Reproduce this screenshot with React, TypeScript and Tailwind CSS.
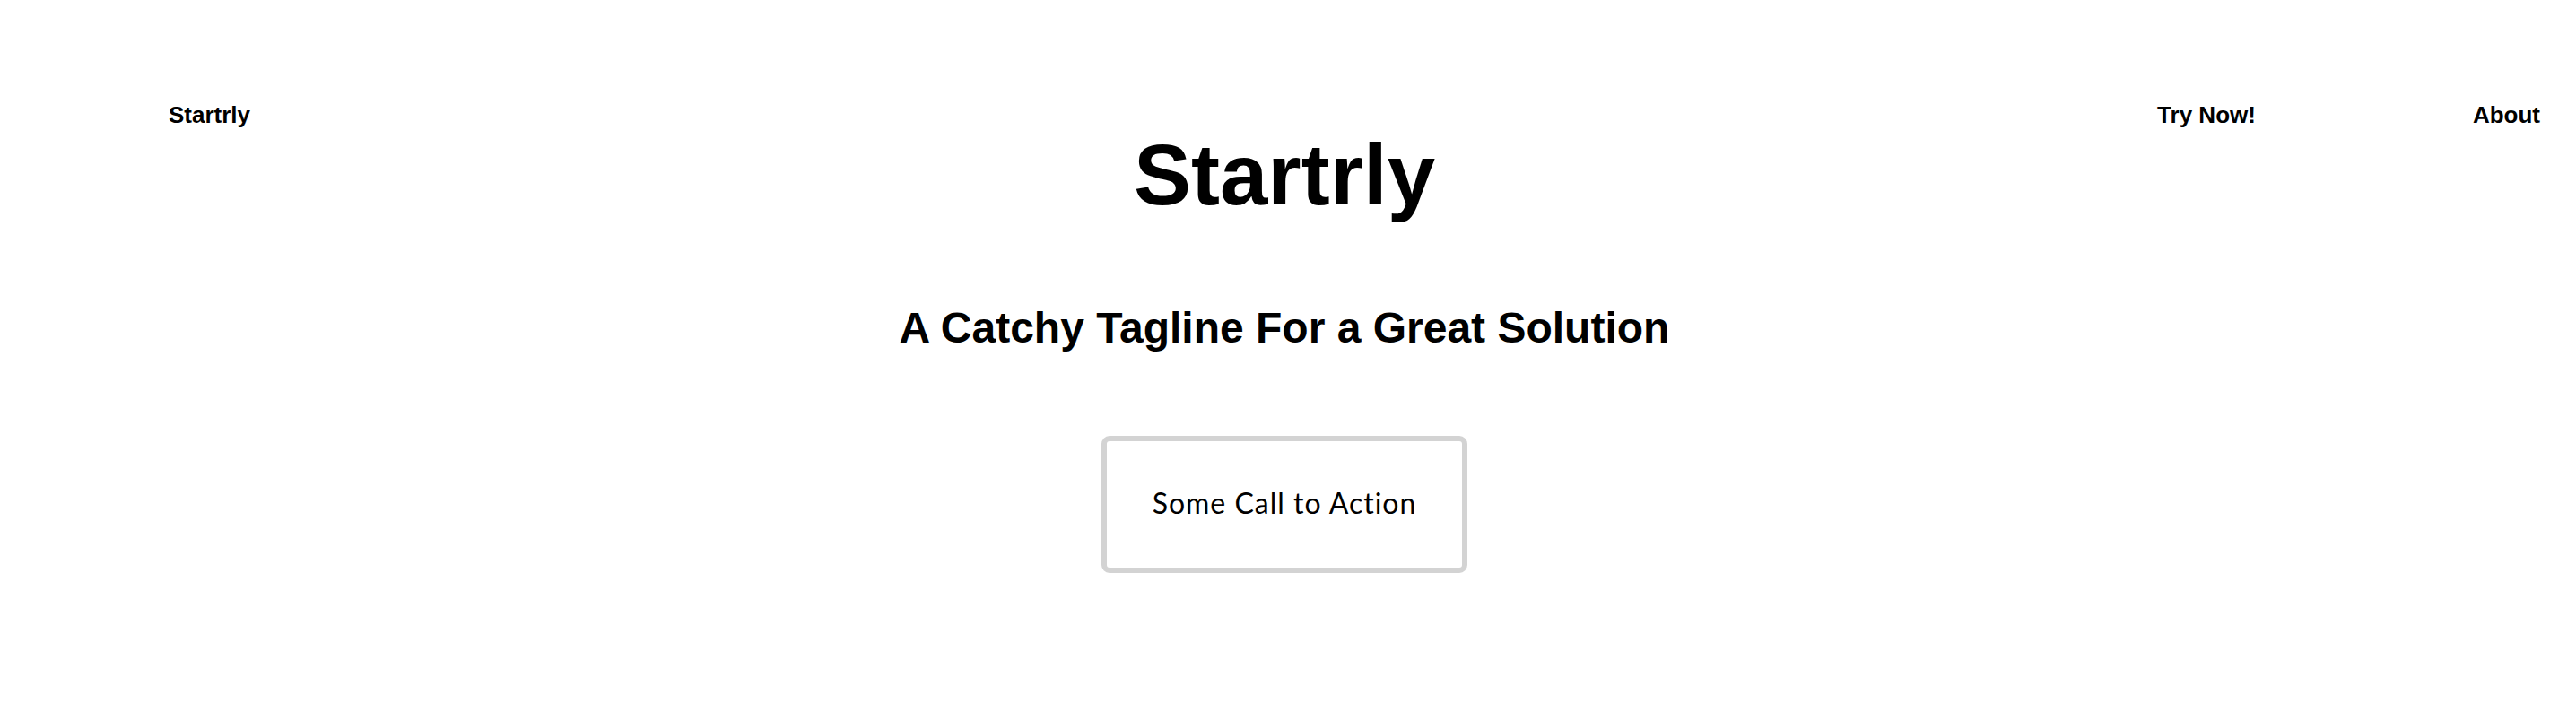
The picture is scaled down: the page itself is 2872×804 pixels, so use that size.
const navLinks = ['Try Now!', 'About']

export default function App() {
  return (
    <div className="min-h-[804px] bg-white text-black font-['Liberation_Sans',Arial,sans-serif]">
      <nav className="flex items-start justify-between pt-[115px] pl-[188px] pr-[40px]">
        <a href="#" className="text-[26px] leading-none font-bold">
          Startrly
        </a>
        <ul className="flex gap-[242px]">
          {navLinks.map(link => (
            <li key={link}>
              <a href="#" className="text-[26px] leading-none font-bold">
                {link}
              </a>
            </li>
          ))}
        </ul>
      </nav>

      <main className="flex flex-col items-center pr-[8px]">
        <h1 className="mt-[3px] text-[96px] leading-none font-bold">Startrly</h1>

        <h2 className="mt-[99px] text-[48px] leading-none font-bold">
          A Catchy Tagline For a Great Solution
        </h2>

        <button
          type="button"
          className="mt-[96px] flex h-[153px] w-[408px] items-center justify-center rounded-[9px] border-[6px] border-[#d3d3d3] bg-white pb-[3px] font-['Lato',sans-serif] text-[32px] tracking-[1px] text-black"
        >
          Some Call to Action
        </button>
      </main>
    </div>
  )
}
